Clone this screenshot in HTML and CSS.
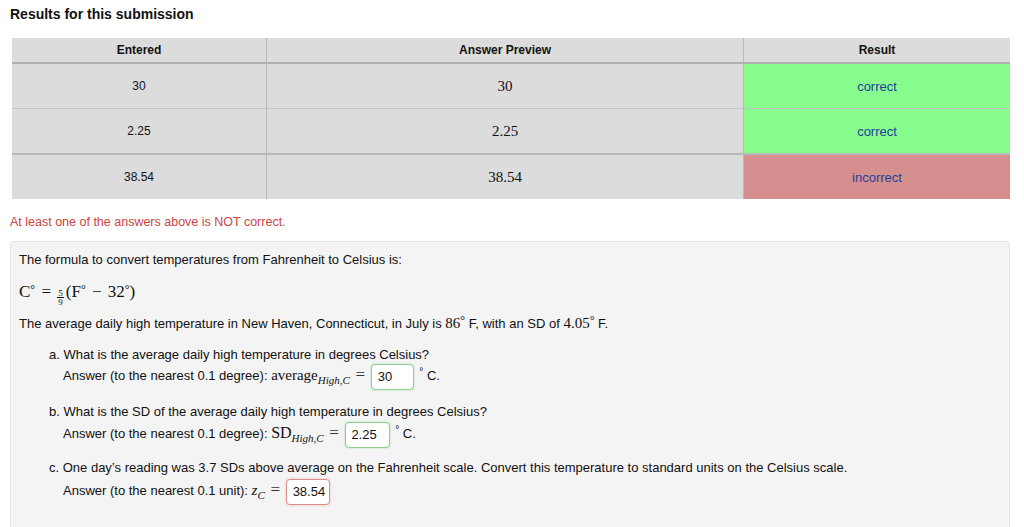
FILE: index.html
```html
<!DOCTYPE html>
<html>
<head>
<meta charset="utf-8">
<link rel="stylesheet" href="styles.css">
</head>
<body>
<h3 class="title">Results for this submission</h3>
<div class="table-wrap">
<table class="results">
  <thead>
    <tr><th class="c1">Entered</th><th class="c2">Answer Preview</th><th class="c3">Result</th></tr>
  </thead>
  <tbody>
    <tr><td>30</td><td class="math">30</td><td class="ok">correct</td></tr>
    <tr><td>2.25</td><td class="math">2.25</td><td class="ok">correct</td></tr>
    <tr><td>38.54</td><td class="math">38.54</td><td class="bad">incorrect</td></tr>
  </tbody>
</table>
</div>
<p class="warn">At least one of the answers above is NOT correct.</p>
<div class="problem">
  <p class="line1">The formula to convert temperatures from Fahrenheit to Celsius is:</p>
  <p class="formula"><span class="m">C<sup>°</sup> <span class="op">=</span> <span class="frac"><span>5</span><span>9</span></span>(F<sup>°</sup> <span class="op">−</span> 32<sup>°</sup>)</span></p>
  <p class="line3">The average daily high temperature in New Haven, Connecticut, in July is <span class="m">86<sup>°</sup></span> F, with an SD of <span class="m">4.05<sup>°</sup></span> F.</p>
  <div class="q qa">
    <div>a. What is the average daily high temperature in degrees Celsius?</div>
    <div class="ans">Answer (to the nearest 0.1 degree): <span class="m">average<sub>High,C</sub></span> <span class="m eq">=</span> <span class="box good w43">30</span> <span class="deg">°</span> C.</div>
  </div>
  <div class="q qb">
    <div>b. What is the SD of the average daily high temperature in degrees Celsius?</div>
    <div class="ans">Answer (to the nearest 0.1 degree): <span class="m big">SD<sub>High,C</sub></span> <span class="m eq">=</span> <span class="box good w45">2.25</span> <span class="deg">°</span> C.</div>
  </div>
  <div class="q qc">
    <div>c. One day’s reading was 3.7 SDs above average on the Fahrenheit scale. Convert this temperature to standard units on the Celsius scale.</div>
    <div class="ans">Answer (to the nearest 0.1 unit): <span class="m"><i>z</i><sub>C</sub></span> <span class="m eq">=</span> <span class="box badbox w44">38.54</span></div>
  </div>
</div>
</body>
</html>
```

FILE: styles.css
```css
html, body { margin: 0; padding: 0; background: #fff; }
body {
  font-family: "Liberation Sans", Arial, sans-serif;
  font-size: 13px;
  color: #111;
  padding: 0 14px 0 10px;
}
.title {
  margin: 0;
  padding-top: 6px;
  font-size: 14px;
  font-weight: bold;
  line-height: 17px;
  color: #111;
}
.table-wrap { padding: 15px 0 0 2px; }
.results {
  width: 998px;
  border-collapse: collapse;
  background: #dcdcdc;
  font-size: 12px;
}
.results th {
  height: 24px;
  font-weight: bold;
  text-align: center;
  border-bottom: 2px solid #b0b0b0;
  border-left: 1px solid #b8b8b8;
  padding: 0;
}
.results th:first-child, .results td:first-child { border-left: none; }
.results .c1 { width: 254px; }
.results .c2 { width: 476px; }
.results td {
  height: 44px;
  text-align: center;
  padding: 0;
  border-top: 1px solid #c4c4c4;
  border-left: 1px solid #b8b8b8;
}
.results tbody tr:first-child td { border-top: none; }
.results tbody tr:nth-child(3) td { border-top: 2px solid #b8b8b8; }
.results td.math { font-family: "Liberation Serif", "DejaVu Serif", serif; font-size: 15px; }
.results td.ok { background: #87fd8e; color: #1f3f9a; font-size: 13px; }
.results td.bad { background: #d68f8f; color: #1f3f9a; font-size: 13px; }
.warn {
  margin: 16px 0 0 0;
  color: #cc4444;
  font-size: 12.5px;
  line-height: 15px;
}
.problem {
  margin-top: 11px;
  background: #f4f4f4;
  border: 1px solid #e6e6e6;
  border-radius: 3px;
  padding: 10px 8px 30px 8px;
  height: 260px;
}
.problem p { margin: 0; line-height: 16px; }
.m { font-family: "Liberation Serif", "DejaVu Serif", serif; font-size: 15px; }
.m sup { font-size: 12px; vertical-align: 4px; line-height: 0; }
.m sub { font-size: 11px; font-style: italic; vertical-align: -4px; line-height: 0; }
.op { margin: 0 2px; }
.formula { margin-top: 15px !important; line-height: 18px !important; }
.formula .m { font-size: 17px; }
.frac {
  display: inline-flex;
  flex-direction: column;
  align-items: center;
  font-size: 9px;
  line-height: 8px;
  vertical-align: 1px;
  margin: 0 2px 0 0;
}
.frac span:first-child { border-bottom: 1px solid #111; padding: 0 1px; }
.line3 { margin-top: 9px !important; }
.q { padding-left: 30px; line-height: 16px; }
.qa { margin-top: 15px; }
.qb { margin-top: 15px; }
.qc { margin-top: 13px; }
.ans { padding-left: 14px; margin-top: 0; line-height: 26px; height: 26px; }
.qb .ans { margin-top: 1px; }
.qc .ans { margin-top: 2px; }
.ans .m, .ans .deg { line-height: 14px; }
.ans .m.big { font-size: 16px; }
.eq { font-size: 17px !important; color: #333; margin: 0 2px; }
.box {
  display: inline-block;
  box-sizing: border-box;
  height: 26px;
  line-height: 24px;
  padding: 0 6px;
  background: #fff;
  border-radius: 4px;
  font-size: 13px;
  vertical-align: middle;
}
.good { border: 1px solid #8fce8f; box-shadow: 0 0 2px #a6dca6; }
.badbox { border: 1px solid #e08c8c; box-shadow: 0 0 2px #e8a8a8; }
.w43 { width: 43px; }
.w45 { width: 45px; }
.w44 { width: 44px; }
.deg { font-size: 10px; vertical-align: 5px; margin-left: 2px; }
```
